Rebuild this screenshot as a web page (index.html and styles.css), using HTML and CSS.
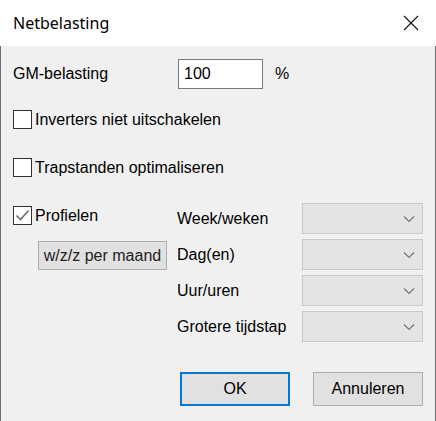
FILE: index.html
```html
<!DOCTYPE html>
<html lang="nl">
<head>
    <meta charset="UTF-8">
    <title>Netbelasting</title>
    <link rel="stylesheet" href="styles.css">
</head>
<body>

<div class="dialog">
    <div class="titlebar">
        <span class="title">Netbelasting</span>
        <span class="close">
            <svg width="16" height="16" viewBox="0 0 16 16"><path d="M1 1 L15 15 M15 1 L1 15" stroke="#111" stroke-width="1.1" fill="none"/></svg>
        </span>
    </div>

    <div class="content">
        <div class="row-gm">
            <span class="label-gm">GM-belasting</span>
            <div class="textbox">100</div>
            <span class="percent">%</span>
        </div>

        <div class="check-row first">
            <span class="box"></span>
            <span>Inverters niet uitschakelen</span>
        </div>

        <div class="check-row">
            <span class="box"></span>
            <span>Trapstanden optimaliseren</span>
        </div>

        <div class="profiles">
            <div class="profiles-left">
                <div class="check-row profile-check">
                    <span class="box">
                        <svg width="17" height="17" viewBox="0 0 17 17"><path d="M2.5 8.5 L6.5 12.5 L14.5 3.5" stroke="#6d6d6d" stroke-width="1.6" fill="none"/></svg>
                    </span>
                    <span>Profielen</span>
                </div>
                <div class="btn btn-month">w/z/z per maand</div>
            </div>
            <div class="profiles-right">
                <div class="combo-row">
                    <span class="combo-label">Week/weken</span>
                    <div class="combo"><svg width="12" height="8" viewBox="0 0 12 8"><path d="M1 1.5 L6 6.5 L11 1.5" stroke="#777" stroke-width="1.2" fill="none"/></svg></div>
                </div>
                <div class="combo-row">
                    <span class="combo-label">Dag(en)</span>
                    <div class="combo"><svg width="12" height="8" viewBox="0 0 12 8"><path d="M1 1.5 L6 6.5 L11 1.5" stroke="#777" stroke-width="1.2" fill="none"/></svg></div>
                </div>
                <div class="combo-row">
                    <span class="combo-label">Uur/uren</span>
                    <div class="combo"><svg width="12" height="8" viewBox="0 0 12 8"><path d="M1 1.5 L6 6.5 L11 1.5" stroke="#777" stroke-width="1.2" fill="none"/></svg></div>
                </div>
                <div class="combo-row">
                    <span class="combo-label">Grotere tijdstap</span>
                    <div class="combo"><svg width="12" height="8" viewBox="0 0 12 8"><path d="M1 1.5 L6 6.5 L11 1.5" stroke="#777" stroke-width="1.2" fill="none"/></svg></div>
                </div>
            </div>
        </div>

        <div class="actions">
            <div class="btn btn-ok">OK</div>
            <div class="btn btn-cancel">Annuleren</div>
        </div>
    </div>
</div>

</body>
</html>
```

FILE: styles.css
```css
body {
    margin: 0;
    font-family: "Liberation Sans", Arial, sans-serif;
    font-size: 16px;
    color: #000;
    background: #f0f0f0;
}
.dialog {
    width: 436px;
    height: 421px;
    display: flex;
    flex-direction: column;
}
.titlebar {
    height: 46px;
    background: #fff;
    display: flex;
    align-items: center;
    justify-content: space-between;
    padding: 0 17px 0 13px;
}
.title {
    font-family: "Noto Sans", sans-serif;
    font-size: 16px;
    margin-top: -1px;
}
.close {
    display: flex;
}
.content {
    flex: 1;
    background: #f0f0f0;
    border-left: 1px solid #6e6e6e;
    border-right: 1px solid #6e6e6e;
    padding: 13px 12px 0 12px;
}
.row-gm {
    display: flex;
    align-items: center;
    height: 30px;
}
.label-gm {
    width: 165px;
}
.textbox {
    width: 78px;
    height: 28px;
    line-height: 28px;
    padding-left: 5px;
    background: #fff;
    border: 1px solid #7a7a7a;
}
.percent {
    margin-left: 12px;
}
.check-row {
    display: flex;
    align-items: center;
    gap: 3px;
    height: 19px;
    margin-top: 29px;
}
.check-row.first {
    margin-top: 21px;
}
.box {
    width: 17px;
    height: 17px;
    border: 1px solid #333;
    background: #fff;
    display: flex;
}
.profiles {
    display: flex;
    margin-top: 26px;
}
.profiles-left {
    width: 164px;
    padding-top: 3px;
}
.check-row.profile-check {
    margin-top: 0;
}
.btn {
    display: flex;
    align-items: center;
    justify-content: center;
    background: #e1e1e1;
    border: 1px solid #adadad;
    color: #000;
}
.btn-month {
    width: 127px;
    height: 27px;
    margin: 16px 0 0 25px;
    color: #222;
}
.profiles-right {
    display: flex;
    flex-direction: column;
    gap: 5px;
}
.combo-row {
    display: flex;
    align-items: center;
    height: 31px;
}
.combo-label {
    width: 125px;
}
.combo {
    width: 119px;
    height: 29px;
    background: #e4e4e4;
    border: 1px solid #cacaca;
    display: flex;
    align-items: center;
    justify-content: flex-end;
    padding-right: 0;
}
.combo svg {
    margin-right: 7px;
}
.actions {
    display: flex;
    justify-content: flex-end;
    gap: 23px;
    margin-top: 30px;
}
.btn-ok {
    width: 106px;
    height: 30px;
    border: 2px solid #0078d7;
}
.btn-cancel {
    width: 108px;
    height: 32px;
}
```
